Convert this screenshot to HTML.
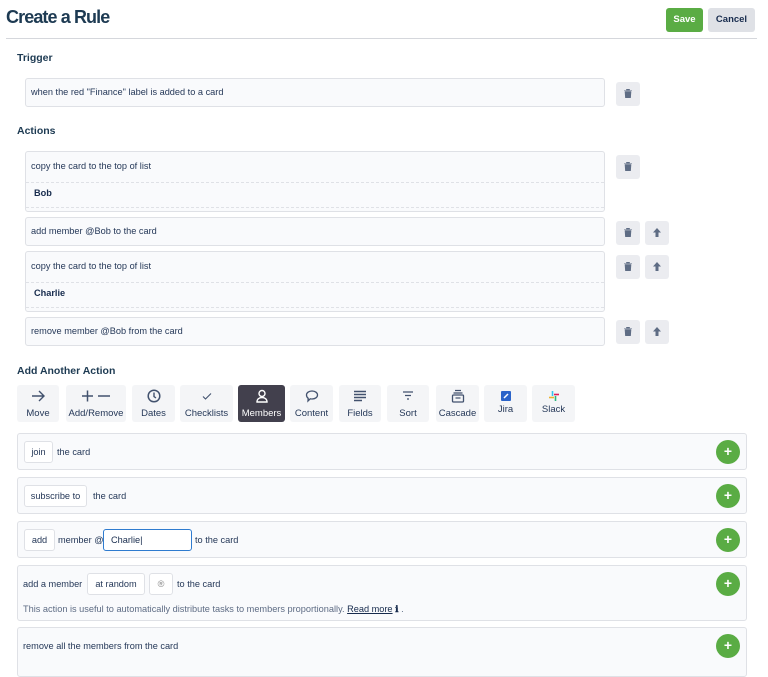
<!DOCTYPE html>
<html><head><style>
*{box-sizing:border-box;margin:0;padding:0}
body{width:768px;height:672px;overflow:hidden;background:#fff;font-family:"Liberation Sans",sans-serif;color:#172b4d;position:relative}
.a{position:absolute;white-space:nowrap}
h1{position:absolute;left:6px;top:7px;font-size:18px;font-weight:bold;color:#1d3a52;letter-spacing:-0.9px}
.btn{position:absolute;border-radius:3px;font-size:9.5px;font-weight:bold;text-align:center;line-height:24px}
.lab{position:absolute;left:17px;font-size:10.5px;font-weight:bold;color:#1d3a52}
.box{position:absolute;left:25px;width:580px;border:1px solid #dfe1e6;border-radius:3px;background:#f9fafc;font-size:9.2px;color:#253858}
.box .t{position:absolute;left:5px}
.dash{position:absolute;left:0;right:0;border-top:1px dashed #dfe1e6}
.ib{position:absolute;width:24px;height:24px;background:#ebecf0;border-radius:3px}
.ib svg{position:absolute;left:8px;top:7px}
.tab{position:absolute;top:385px;height:37px;background:#f4f5f7;border-radius:3px;font-size:9.5px;color:#253858;text-align:center}
.tab .l{position:absolute;left:-5px;right:-5px;top:23px}
.tab svg{position:absolute;left:50%;transform:translateX(-50%);top:4px}
.pn{position:absolute;left:17px;width:730px;border:1px solid #dfe1e6;border-radius:3px;background:#f9fafc;font-size:9.2px;color:#253858}
.in{position:absolute;top:7px;height:22px;border:1px solid #dfe1e6;border-radius:3px;background:#fff;line-height:20px;padding:0;text-align:center;white-space:nowrap}
.pl{position:absolute;right:6px;width:24px;height:24px;border-radius:50%;background:#5aac44;color:#fff;font-weight:bold;font-size:14px;text-align:center;line-height:23px}
</style></head><body>
<h1>Create a Rule</h1>
<div class="btn" style="left:666px;top:8px;width:37px;background:#5aac44;color:#fff">Save</div>
<div class="btn" style="left:708px;top:8px;width:47px;background:#dfe1e6;color:#172b4d">Cancel</div>
<div class="a" style="left:6px;top:38px;width:751px;border-top:1px solid #d5d7dc"></div>

<div class="lab" style="top:52px">Trigger</div>
<div class="box" style="top:78px;height:29px"><span class="t" style="top:8px">when the red "Finance" label is added to a card</span></div>
<div class="ib" style="left:616px;top:82px"><svg width="8" height="9" viewBox="0 0 8 9"><path d="M0 1.5h8M2.5 1.5V0h3v1.5M1 2.5h6l-.5 6.5h-5z" fill="#5e6c84" stroke="#5e6c84" stroke-width=".6"/></svg></div>

<div class="lab" style="top:125px">Actions</div>
<div class="box" style="top:151px;height:61px"><span class="t" style="top:9px">copy the card to the top of list</span><div class="dash" style="top:30px"></div><span class="t" style="top:36px;left:8px;font-weight:bold;color:#172b4d">Bob</span><div class="dash" style="top:55px"></div></div>
<div class="box" style="top:217px;height:29px"><span class="t" style="top:8px">add member @Bob to the card</span></div>
<div class="box" style="top:251px;height:61px"><span class="t" style="top:9px">copy the card to the top of list</span><div class="dash" style="top:30px"></div><span class="t" style="top:36px;left:8px;font-weight:bold;color:#172b4d">Charlie</span><div class="dash" style="top:55px"></div></div>
<div class="box" style="top:317px;height:29px"><span class="t" style="top:8px">remove member @Bob from the card</span></div>

<div class="ib" style="left:616px;top:155px"><svg width="8" height="9" viewBox="0 0 8 9"><path d="M0 1.5h8M2.5 1.5V0h3v1.5M1 2.5h6l-.5 6.5h-5z" fill="#5e6c84" stroke="#5e6c84" stroke-width=".6"/></svg></div>
<div class="ib" style="left:616px;top:221px"><svg width="8" height="9" viewBox="0 0 8 9"><path d="M0 1.5h8M2.5 1.5V0h3v1.5M1 2.5h6l-.5 6.5h-5z" fill="#5e6c84" stroke="#5e6c84" stroke-width=".6"/></svg></div>
<div class="ib" style="left:645px;top:221px"><svg width="8" height="9" viewBox="0 0 8 9"><path d="M4 0L0 4.5h2.5V9h3V4.5H8z" fill="#5e6c84"/></svg></div>
<div class="ib" style="left:616px;top:255px"><svg width="8" height="9" viewBox="0 0 8 9"><path d="M0 1.5h8M2.5 1.5V0h3v1.5M1 2.5h6l-.5 6.5h-5z" fill="#5e6c84" stroke="#5e6c84" stroke-width=".6"/></svg></div>
<div class="ib" style="left:645px;top:255px"><svg width="8" height="9" viewBox="0 0 8 9"><path d="M4 0L0 4.5h2.5V9h3V4.5H8z" fill="#5e6c84"/></svg></div>
<div class="ib" style="left:616px;top:320px"><svg width="8" height="9" viewBox="0 0 8 9"><path d="M0 1.5h8M2.5 1.5V0h3v1.5M1 2.5h6l-.5 6.5h-5z" fill="#5e6c84" stroke="#5e6c84" stroke-width=".6"/></svg></div>
<div class="ib" style="left:645px;top:320px"><svg width="8" height="9" viewBox="0 0 8 9"><path d="M4 0L0 4.5h2.5V9h3V4.5H8z" fill="#5e6c84"/></svg></div>

<div class="lab" style="top:365px">Add Another Action</div>
<div class="tab" style="left:17px;width:42px"><svg width="14" height="14" viewBox="0 0 14 14"><path d="M1 7h12M8 2l5 5-5 5" fill="none" stroke="#42526e" stroke-width="1.4"/></svg><div class="l">Move</div></div>
<div class="tab" style="left:66px;width:60px"><svg width="30" height="14" viewBox="0 0 30 14"><path d="M1 7h11M6.5 1.5v11M17 7h12" fill="none" stroke="#42526e" stroke-width="1.5"/></svg><div class="l">Add/Remove</div></div>
<div class="tab" style="left:132px;width:43px"><svg width="14" height="14" viewBox="0 0 14 14"><circle cx="7" cy="7" r="5.8" fill="none" stroke="#42526e" stroke-width="1.5"/><path d="M7 3.5V7.5l2 1.5" fill="none" stroke="#42526e" stroke-width="1.4"/></svg><div class="l">Dates</div></div>
<div class="tab" style="left:180px;width:53px"><svg width="14" height="14" viewBox="0 0 14 14"><path d="M3 7.5l2.5 2.5L11 4.5" fill="none" stroke="#42526e" stroke-width="1.1"/></svg><div class="l">Checklists</div></div>
<div class="tab" style="left:238px;width:47px;background:#42404d;color:#fff"><svg width="14" height="14" viewBox="0 0 14 14"><circle cx="7" cy="4.5" r="3" fill="none" stroke="#fff" stroke-width="1.4"/><path d="M2 13c0-3 2.3-4.5 5-4.5s5 1.5 5 4.5z" fill="none" stroke="#fff" stroke-width="1.4"/></svg><div class="l">Members</div></div>
<div class="tab" style="left:290px;width:43px"><svg width="14" height="14" viewBox="0 0 14 14"><path d="M7 2c3.3 0 5.5 1.8 5.5 4s-2.2 4-5.5 4c-.6 0-1.2 0-1.7-.2L3 12l.2-2.7C2 8.5 1.5 7.4 1.5 6c0-2.2 2.2-4 5.5-4z" fill="none" stroke="#42526e" stroke-width="1.3"/></svg><div class="l">Content</div></div>
<div class="tab" style="left:339px;width:42px"><svg width="14" height="14" viewBox="0 0 14 14"><path d="M1 2.5h12M1 5.5h12M1 8.5h12M1 11.5h8" stroke="#42526e" stroke-width="1.4"/></svg><div class="l">Fields</div></div>
<div class="tab" style="left:387px;width:42px"><svg width="14" height="14" viewBox="0 0 14 14"><path d="M2 3h10M4 6.5h6M6 10h2" stroke="#42526e" stroke-width="1.3"/></svg><div class="l">Sort</div></div>
<div class="tab" style="left:436px;width:43px"><svg width="14" height="14" viewBox="0 0 14 14"><path d="M4 1.5h6M2.5 4h9" stroke="#42526e" stroke-width="1.2"/><rect x="1.5" y="6" width="11" height="7" rx="1" fill="none" stroke="#42526e" stroke-width="1.3"/><path d="M4.5 9h5" stroke="#42526e" stroke-width="1.2"/></svg><div class="l">Cascade</div></div>
<div class="tab" style="left:484px;width:43px"><svg width="10" height="10" viewBox="0 0 10 10" style="top:6px"><rect width="10" height="10" rx="1" fill="#2b64c9"/><path d="M3 7l4-4" stroke="#fff" stroke-width="1.5"/></svg><div class="l" style="top:19px">Jira</div></div>
<div class="tab" style="left:532px;width:43px"><svg width="10" height="10" viewBox="0 0 10 10" style="top:6px"><path d="M3.5 0v5" stroke="#36c5f0" stroke-width="1.6"/><path d="M0 6.5h5" stroke="#ecb22e" stroke-width="1.6"/><path d="M6.5 5v5" stroke="#2eb67d" stroke-width="1.6"/><path d="M5 3.5h5" stroke="#e01e5a" stroke-width="1.6"/></svg><div class="l" style="top:19px">Slack</div></div>

<div class="pn" style="top:433px;height:37px"><div class="in" style="left:6px;width:29px">join</div><span class="a" style="left:39px;top:13px">the card</span><div class="pl" style="top:6px">+</div></div>
<div class="pn" style="top:477px;height:37px"><div class="in" style="left:6px;width:63px">subscribe to</div><span class="a" style="left:75px;top:13px">the card</span><div class="pl" style="top:6px">+</div></div>
<div class="pn" style="top:521px;height:37px"><div class="in" style="left:6px;width:31px">add</div><span class="a" style="left:40px;top:13px">member @</span><div class="in" style="left:85px;width:89px;border:1.5px solid #2e7bcf;color:#172b4d;text-align:left;padding-left:7px">Charlie|</div><span class="a" style="left:177px;top:13px">to the card</span><div class="pl" style="top:6px">+</div></div>
<div class="pn" style="top:565px;height:56px"><span class="a" style="left:5px;top:13px">add a member</span><div class="in" style="left:69px;width:58px">at random</div><div class="in" style="left:131px;width:24px;color:#888">®</div><span class="a" style="left:159px;top:13px">to the card</span><div class="pl" style="top:6px">+</div><span class="a" style="left:5px;top:38px;color:#5e6c84">This action is useful to automatically distribute tasks to members proportionally. <u style="color:#172b4d">Read more</u> <b style="color:#172b4d">ℹ</b> .</span></div>
<div class="pn" style="top:627px;height:50px"><span class="a" style="left:5px;top:13px">remove all the members from the card</span><div class="pl" style="top:6px">+</div></div>
</body></html>
